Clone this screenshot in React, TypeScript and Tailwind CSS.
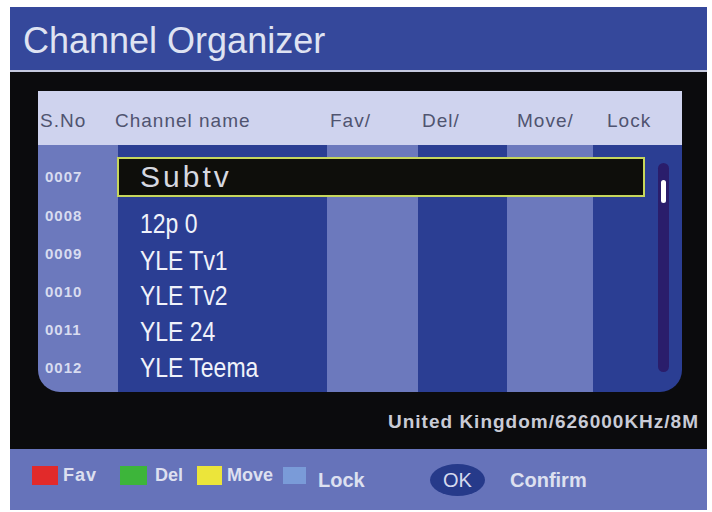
const columns = [
  { w: "w-[80px]", bg: "bg-[#6c79bd]" },
  { w: "w-[209px]", bg: "bg-[#2b3e93]" },
  { w: "w-[91px]", bg: "bg-[#6c79bd]" },
  { w: "w-[89px]", bg: "bg-[#2b3e93]" },
  { w: "w-[86px]", bg: "bg-[#6c79bd]" },
  { w: "w-[89px]", bg: "bg-[#2b3e93]" },
]

// names sit a little off the number rows in the original, so each has its own nudge
const channels = [
  { no: "0008", name: "12p 0", nudge: "pt-[16px]" },
  { no: "0009", name: "YLE Tv1", nudge: "pt-[14px]" },
  { no: "0010", name: "YLE Tv2", nudge: "pt-[8px]" },
  { no: "0011", name: "YLE 24", nudge: "pt-[4px]" },
  { no: "0012", name: "YLE Teema", nudge: "pt-[0px]" },
]

export default function App() {
  return (
    <div className="w-[712px] h-[512px] bg-white pt-[7px] font-['Liberation_Sans',Arial,sans-serif]">
      <div className="ml-[10px] w-[697px]">
        {/* title */}
        <div className="h-[63px] bg-[#35489b] flex items-center pl-[13px] pt-[4px]">
          <span className="text-[36px] text-[#dfe3f2] leading-none">Channel Organizer</span>
        </div>
        <div className="h-[2px] bg-[#c5c9de]" />

        {/* body */}
        <div className="h-[377px] bg-[#0b0b0d] pt-[19px]">
          <div className="ml-[28px] w-[644px]">
            <div className="h-[54px] bg-[#cfd3ee] flex items-center pt-[7px] pl-[2px] text-[19px] tracking-[1px] text-[#505470]">
              <span className="w-[75px]">S.No</span>
              <span className="w-[215px]">Channel name</span>
              <span className="w-[92px]">Fav/</span>
              <span className="w-[95px]">Del/</span>
              <span className="w-[90px]">Move/</span>
              <span>Lock</span>
            </div>

            <div className="relative h-[247px] rounded-b-[22px] overflow-hidden">
              <div className="absolute inset-0 flex">
                {columns.map((c, i) => (
                  <div key={i} className={`${c.w} ${c.bg} h-full`} />
                ))}
              </div>

              <div className="relative flex flex-col pt-[12px]">
                <div className="h-[40px] flex items-center">
                  <span className="w-[79px] pl-[7px] text-[15px] font-bold tracking-[1px] text-[#d8dcf0]">0007</span>
                  <div className="w-[528px] h-[40px] border-2 border-[#c6d65c] bg-[#0e0e0b] flex items-center pl-[21px]">
                    <span className="text-[30px] tracking-[3px] text-[#d6d8e0] leading-none">Subtv</span>
                  </div>
                </div>
                {channels.map((ch) => (
                  <div key={ch.no} className="h-[38px] flex items-center">
                    <span className="w-[80px] pl-[7px] text-[15px] font-bold tracking-[1px] text-[#d8dcf0]">{ch.no}</span>
                    <span className={`${ch.nudge} ml-[22px] inline-block origin-left scale-x-[0.82] text-[28px] leading-none text-[#f0f2fa]`}>
                      {ch.name}
                    </span>
                  </div>
                ))}
              </div>

              {/* scrollbar */}
              <div className="absolute left-[620px] top-[18px] w-[11px] h-[209px] rounded-full bg-[#2a1d6b]">
                <div className="ml-[3px] mt-[17px] w-[5px] h-[23px] rounded-sm bg-white" />
              </div>
            </div>
          </div>

          <div className="h-[57px] flex items-center justify-end pr-[8px] pt-[4px]">
            <span className="text-[19px] font-bold tracking-[1px] text-[#c9cbd6]">United Kingdom/626000KHz/8M</span>
          </div>
        </div>

        {/* footer */}
        <div className="h-[61px] bg-[#6673ba] flex items-center pl-[22px] font-bold text-[#dde0f0]">
          <div className="flex items-center mb-[8px]">
            <span className="w-[26px] h-[19px] bg-[#e22a2a]" />
            <span className="ml-[5px] w-[57px] text-[18px] tracking-[1px]">Fav</span>
            <span className="w-[27px] h-[19px] bg-[#3db53a]" />
            <span className="ml-[8px] w-[42px] text-[18px]">Del</span>
            <span className="w-[25px] h-[19px] bg-[#ece53a]" />
            <span className="ml-[5px] w-[56px] text-[18px]">Move</span>
            <span className="w-[23px] h-[17px] bg-[#7a9bd8]" />
          </div>
          <span className="ml-[12px] w-[112px] text-[20px]">Lock</span>
          <div className="w-[55px] h-[32px] rounded-[50%] bg-[#263a8a] flex items-center justify-center">
            <span className="text-[20px] font-normal text-[#d5d9ee]">OK</span>
          </div>
          <span className="ml-[25px] text-[20px]">Confirm</span>
        </div>
      </div>
    </div>
  )
}
